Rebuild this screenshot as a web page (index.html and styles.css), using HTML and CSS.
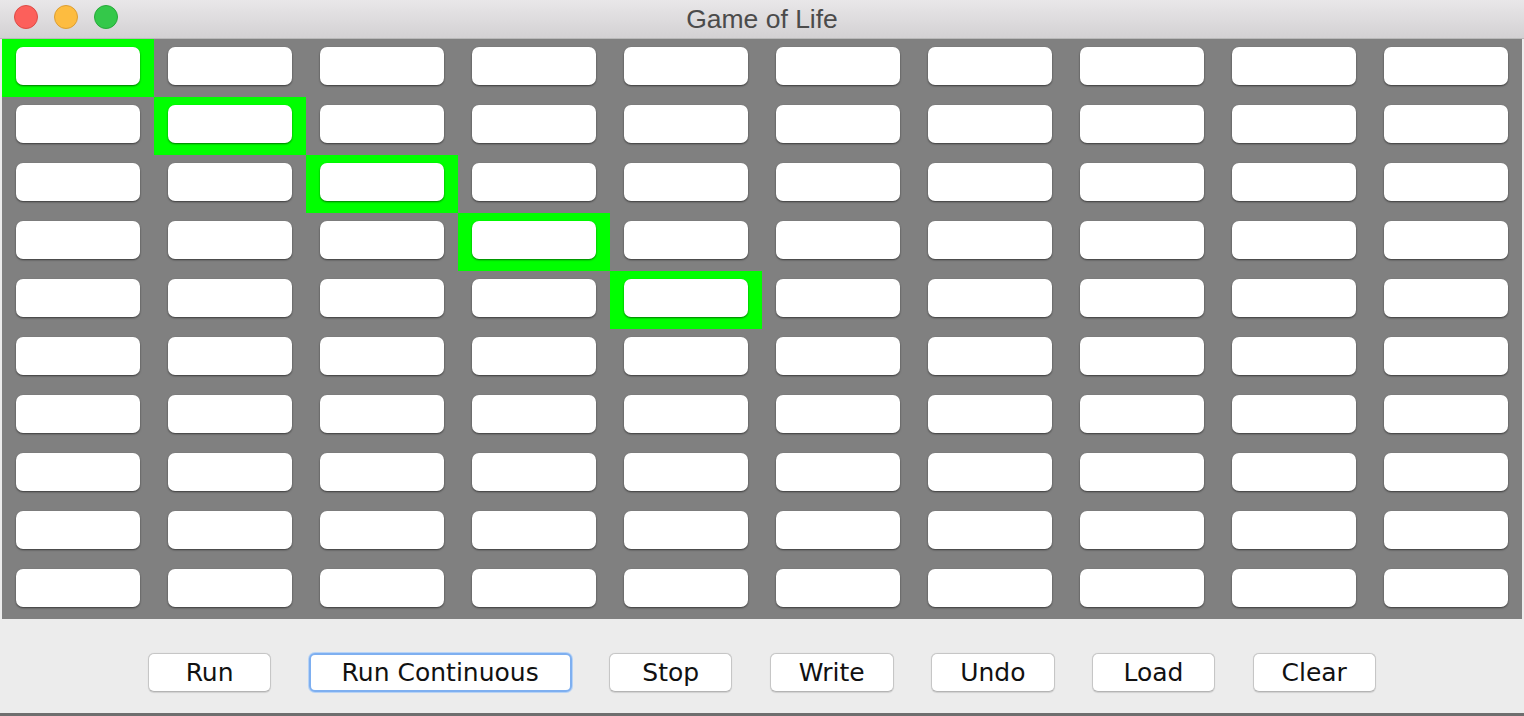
FILE: index.html
```html
<!DOCTYPE html>
<html lang="en">
<head>
<meta charset="utf-8">
<title>Game of Life</title>
<link rel="stylesheet" href="styles.css">
</head>
<body>
<div class="window">
  <header class="titlebar">
    <div class="lights">
      <span class="light red"></span>
      <span class="light yellow"></span>
      <span class="light green"></span>
    </div>
    <div class="title">Game of Life</div>
  </header>
  <main class="board" id="board"></main>
  <footer class="controls">
    <button class="btn">Run</button>
    <button class="btn focused">Run Continuous</button>
    <button class="btn">Stop</button>
    <button class="btn">Write</button>
    <button class="btn">Undo</button>
    <button class="btn">Load</button>
    <button class="btn">Clear</button>
  </footer>
</div>
<script src="app.js"></script>
</body>
</html>
```

FILE: app.js
```js
var board = document.getElementById('board');
for (var r = 0; r < 10; r++) {
  for (var c = 0; c < 10; c++) {
    var cell = document.createElement('div');
    cell.className = 'cell' + (r === c && r < 5 ? ' alive' : '');
    var b = document.createElement('div');
    b.className = 'cell-btn';
    cell.appendChild(b);
    board.appendChild(cell);
  }
}
```

FILE: styles.css
```css
html, body {
  margin: 0;
  padding: 0;
  background: #ececec;
  width: 1524px;
  height: 716px;
  overflow: hidden;
}

.window {
  display: flex;
  flex-direction: column;
  height: 716px;
  box-sizing: border-box;
  border-bottom: 3px solid #6e6e6e;
}

.titlebar {
  position: relative;
  height: 39px;
  box-sizing: border-box;
  border-bottom: 1px solid #b9b9b9;
  background: linear-gradient(#e9e7e9, #d3d1d3);
  display: flex;
  align-items: center;
  justify-content: center;
}

.lights {
  position: absolute;
  left: 14px;
  top: 5px;
  display: flex;
  gap: 16px;
}

.light {
  width: 24px;
  height: 24px;
  border-radius: 50%;
  box-sizing: border-box;
}
.light.red { background: #fc605b; border: 1px solid #dd4b46; }
.light.yellow { background: #fdbc40; border: 1px solid #dc9e33; }
.light.green { background: #34c84a; border: 1px solid #27a93a; }

.title {
  font-family: "Liberation Sans", Arial, sans-serif;
  font-size: 26.5px;
  color: #4b4b4b;
  margin-top: 0;
}

.board {
  margin: 0 2px;
  display: grid;
  grid-template-columns: repeat(10, 152px);
  grid-template-rows: repeat(10, 58px);
  background: #808080;
}

.cell {
  padding: 8px 14px 12px 14px;
}

.cell.alive {
  background: #00ff00;
}

.cell-btn {
  height: 38px;
  background: #ffffff;
  border-radius: 7px;
  box-shadow: 0 1px 2px rgba(0, 0, 0, 0.55);
}

.controls {
  flex: 1;
  display: flex;
  justify-content: center;
  align-items: flex-start;
  padding-top: 34px;
  gap: 37.5px;
}

.btn {
  font-family: "DejaVu Sans", "Lucida Grande", sans-serif;
  font-size: 25px;
  color: #111;
  height: 39px;
  min-width: 123px;
  padding: 0 28px;
  background: #ffffff;
  border: 1px solid #c6c6c6;
  border-bottom-color: #b4b4b4;
  border-radius: 6px;
  box-shadow: 0 0.5px 1px rgba(0, 0, 0, 0.12);
  line-height: 36px;
  margin: 0;
}

.btn.focused {
  border: 2px solid #7eaff0;
  box-shadow: 0 0 0 1px #b7d3f6;
  line-height: 34px;
  padding: 0 31px;
}
```
